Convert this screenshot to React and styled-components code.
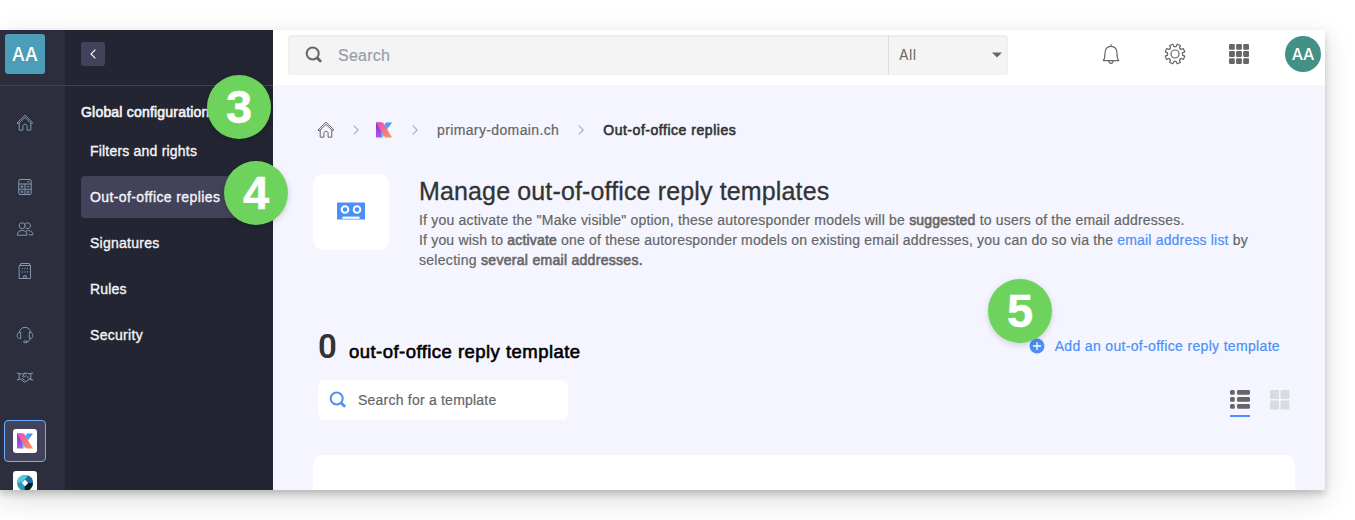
import React from "react";
import styled, { createGlobalStyle } from "styled-components";

const GlobalStyle = createGlobalStyle`
  * {
    box-sizing: border-box;
  }
  body {
    margin: 0;
    background: #fff;
    overflow: hidden;
    font-family: "Liberation Sans", Arial, sans-serif;
    -webkit-font-smoothing: antialiased;
  }
  svg {
    display: block;
    flex: none;
  }
`;

const Page = styled.div`
  height: 520px;
  padding-top: 30px;
  overflow: hidden;
`;
const Window = styled.div`
  position: relative;
  width: 1325px;
  height: 460px;
  box-shadow: 0 4px 7px rgba(0, 0, 0, 0.19), 0 9px 28px rgba(0, 0, 0, 0.14);
`;
const Layout = styled.div`
  display: flex;
  height: 100%;
  overflow: hidden;
`;
const Rail = styled.nav`
  flex: none;
  width: 65px;
  height: 460px;
  overflow: hidden;
  background: #2c2e3e;
`;
const RailTop = styled.div`
  height: 56px;
  padding: 4px 5px;
  border-bottom: 1px solid #41425a;
`;
const Workspace = styled.div`
  width: 40px;
  height: 40px;
  border-radius: 3px;
  background: #4c9eb8;
  color: #fff;
  font: 500 18px/42px Inter, sans-serif;
  text-align: center;
`;
const RailItem = styled.div`
  display: flex;
  align-items: center;
  justify-content: center;
  width: 50px;
  height: 42px;
  margin-top: ${(p) => p.$gap || 0}px;
  color: #8298ae;
`;
const ProductItem = styled.div`
  display: flex;
  align-items: center;
  justify-content: center;
  width: 42px;
  height: 42px;
  margin-left: 4px;
  border: 1px solid ${(p) => (p.$active ? "#69aeff" : "transparent")};
  border-radius: 4px;
  background: ${(p) => (p.$active ? "#42425a" : "transparent")};
`;
const ProductTile = styled.div`
  display: flex;
  align-items: center;
  justify-content: center;
  width: 24px;
  height: 24px;
  border-radius: 3px;
  background: #fff;
`;

const Sidebar = styled.aside`
  flex: none;
  width: 208px;
  background: #232532;
  color: #f4f4f8;
`;
const SidebarTop = styled.div`
  height: 56px;
  padding: 12px 16px;
  border-bottom: 1px solid #41425a;
`;
const BackButton = styled.div`
  display: flex;
  align-items: center;
  justify-content: center;
  width: 24px;
  height: 24px;
  border-radius: 3px;
  background: #42425a;
`;
const Menu = styled.div`
  padding: 13px 16px;
`;
const MenuTitle = styled.div`
  height: 31px;
  font-size: 14px;
  line-height: 27px;
  white-space: nowrap;
  letter-spacing: ${(p) => p.$spacing}px;
  -webkit-text-stroke: 0.6px;
`;
const MenuItem = styled.div`
  height: 42px;
  margin-bottom: 4px;
  padding-left: 9px;
  border-radius: 4px;
  background: ${(p) => (p.$active ? "#42425a" : "transparent")};
  font-size: 14px;
  line-height: 42px;
  white-space: nowrap;
  letter-spacing: ${(p) => p.$spacing}px;
  -webkit-text-stroke: 0.35px;
`;

const Main = styled.main`
  flex: 1;
  min-width: 0;
  background: #f4f5fe;
`;
const TopBar = styled.header`
  display: flex;
  align-items: center;
  height: 55px;
  padding: 0 4px 7px 15px;
  background: #fff;
  color: #666;
`;
const SearchBar = styled.div`
  display: flex;
  align-items: center;
  width: 720px;
  height: 40px;
  margin-top: 2px;
  border-radius: 4px;
  background: #f4f4f4;
  box-shadow: inset 0 1px 3px rgba(0, 0, 0, 0.06);
`;
const SearchField = styled.div`
  display: flex;
  align-items: center;
  width: 601px;
  height: 40px;
  padding: 0 0 1px 17px;
  border-right: 1px solid #dcdcdc;
  color: #9a9daa;
  font-size: 16px;
`;
const Placeholder = styled.span`
  padding: 3px 0 0 15px;
  letter-spacing: 0.25px;
  -webkit-text-stroke: 0.2px;
`;
const Scope = styled.div`
  display: flex;
  flex: 1;
  align-items: center;
  justify-content: space-between;
  padding: 0 6px 1px 10px;
  font: 400 14px Inter, sans-serif;
  letter-spacing: 0.3px;
`;
const TopIcons = styled.div`
  display: flex;
  align-items: center;
  gap: 40px;
  margin-left: 91px;
`;
const Avatar = styled.div`
  width: 36px;
  height: 36px;
  margin-left: auto;
  border-radius: 50%;
  background: #439184;
  color: #fff;
  font: 500 16px/37px Inter, sans-serif;
  letter-spacing: -0.3px;
  text-align: center;
`;

const Content = styled.div`
  padding: 33px 30px 0 40px;
`;
const Breadcrumb = styled.div`
  display: flex;
  align-items: center;
  height: 24px;
  padding-left: 4px;
  color: #666;
  font-size: 14px;
`;
const Crumb = styled.span`
  letter-spacing: ${(p) => p.$spacing}px;
  color: ${(p) => (p.$current ? "#333" : "#666")};
  -webkit-text-stroke: ${(p) => (p.$current ? 0.6 : 0.2)}px;
`;
const Separator = styled.span`
  display: flex;
  justify-content: center;
  width: ${(p) => p.$width}px;
  color: #aaaab2;
`;
const Intro = styled.section`
  display: flex;
  gap: 30px;
  height: 98px;
  margin-top: 32px;
`;
const IntroIcon = styled.div`
  display: flex;
  align-items: center;
  justify-content: center;
  width: 76px;
  height: 76px;
  padding-bottom: 2px;
  border-radius: 10px;
  background: #fff;
`;
const Heading = styled.h1`
  margin: 0;
  height: 36px;
  color: #333;
  font-size: 25px;
  font-weight: 400;
  line-height: 35px;
  letter-spacing: 0.14px;
  -webkit-text-stroke: 0.3px;
`;
const Text = styled.p`
  margin: 0;
  color: #666;
  font-size: 14px;
  line-height: 20px;
  white-space: nowrap;
  letter-spacing: ${(p) => p.$spacing}px;
  -webkit-text-stroke: 0.2px;
`;
const Strong = styled.strong`
  font-weight: 400;
  -webkit-text-stroke: 0.6px;
`;
const Link = styled.a`
  color: #4a90f8;
`;
const ListHeader = styled.div`
  display: flex;
  align-items: baseline;
  height: 40px;
  margin-top: 55px;
  padding: 0 15px 0 5px;
`;
const Count = styled.span`
  width: 31px;
  color: #333;
  font: 600 33px/40px "Roboto", sans-serif;
`;
const CountLabel = styled.span`
  font-size: 18.5px;
  letter-spacing: ${(p) => p.$spacing}px;
  -webkit-text-stroke: 0.6px;
`;
const AddLink = styled.a`
  display: flex;
  align-items: center;
  align-self: flex-start;
  gap: 10px;
  margin-left: auto;
  color: #4a90f8;
  font-size: 14px;
  line-height: 38px;
  letter-spacing: ${(p) => p.$spacing}px;
  -webkit-text-stroke: 0.2px;
`;
const Toolbar = styled.div`
  display: flex;
  align-items: flex-start;
  justify-content: space-between;
  margin-top: 13px;
  padding: 0 5px;
`;
const TemplateSearch = styled.div`
  display: flex;
  align-items: center;
  gap: 11px;
  width: 250px;
  height: 40px;
  padding-left: 11px;
  border-radius: 6px;
  background: #fff;
  color: #666;
  font-size: 14px;
  letter-spacing: 0.22px;
  -webkit-text-stroke: 0.2px;
`;
const Views = styled.div`
  display: flex;
  gap: 20px;
  padding-top: 10px;
`;
const View = styled.div`
  height: 27px;
  border-bottom: 2px solid ${(p) => (p.$active ? "#4a90f8" : "transparent")};
`;
const Panel = styled.div`
  height: 60px;
  margin-top: 35px;
  border-radius: 10px;
  background: #fff;
`;

const Step = styled.div`
  position: absolute;
  left: ${(p) => p.$x}px;
  top: ${(p) => p.$y}px;
  width: 64px;
  height: 64px;
  border-radius: 50%;
  background: #6ed35d;
  box-shadow: 0 2px 6px rgba(0, 0, 0, 0.16);
  color: #fff;
  font: 700 47px/63px "Liberation Sans", Arial, sans-serif;
  text-align: center;
  -webkit-text-stroke: 0.5px;
`;

const Icon = ({ size = 18, stroke = 1, children }) => (
  <svg
    width={size}
    height={size}
    viewBox="0 0 18 18"
    fill="none"
    stroke="currentColor"
    strokeWidth={stroke}
    strokeLinecap="round"
    strokeLinejoin="round"
  >
    {children}
  </svg>
);

const HomeIcon = () => (
  <Icon>
    <path d="M1.2 8.8 9 1.2l7.8 7.6-1.2.9L9 3.4 2.4 9.7zM3.2 9v7.2h3.7v-3.9c0-1.2.8-2 2.1-2s2.1.8 2.1 2v3.9h3.7V9" />
  </Icon>
);

const CalculatorIcon = () => (
  <Icon>
    <rect x="2.8" y="1.5" width="12.4" height="15" rx="1.2" />
    <path d="M3 6h12M3 11.2h12M9 6v10.3M11.5 3.8h1.5M5 8.6h2M6 7.7v1.8M11 8.6h2M5 13l2 1.6M7 13l-2 1.6M11 13.2h2M11 14.8h2" />
  </Icon>
);

const UsersIcon = () => (
  <Icon>
    <circle cx="6.2" cy="5.7" r="3" />
    <path d="M9.6 3.4a3 3 0 1 1 .2 4.8M1.3 14.8c0-2.7 1.8-4.3 4.9-4.3s4.8 1.6 4.8 4.3zM10.4 10.9c3.3-1.2 6.5.6 6.5 3.9h-3.6" />
  </Icon>
);

const BuildingIcon = () => (
  <Icon>
    <path d="M3.5 3.5h11v13h-11zM4.2 3.3l.6-1.8h8.4l.6 1.8M7.8 16.2v-2.4h2.5v2.4" />
    <path d="M6.4 6.2v.5M9 6.2v.5M11.6 6.2v.5M6.4 9.7v.5M9 9.7v.5M11.6 9.7v.5" />
  </Icon>
);

const HeadsetIcon = () => (
  <Icon>
    <path d="M3.3 6.2C4 3 6 1.4 9 1.4S14 3 14.7 6.2M3.6 6.3h1.1v6.2H3.4C2 12.3 1.2 11 1.2 9.4s.9-2.9 2.4-3.1zM14.4 6.3h-1.1v6.2h1.3c1.4-.2 2.2-1.5 2.2-3.1s-.9-2.9-2.4-3.1zM14.4 12.5c-.3 1.9-1.3 3-3.4 3.3" />
    <ellipse cx="9.4" cy="15.8" rx="1.8" ry="1" />
  </Icon>
);

const HandshakeIcon = () => (
  <Icon>
    <path d="M1.2 5.2h2v6.6h-2M16.8 5.2h-2v6.6h2M3.3 6h3.4L9 5l2.8.7h2.8M3.3 11.2h1.2l4.2 3.1 4.7-3.1h1.4M9 5.2 6.5 8.5c1.2.8 2.5.3 3.6-1l3.5 3.5M6.2 10.3l2.3 2" />
  </Icon>
);

const SearchIcon = ({ size, color }) => (
  <svg
    width={size}
    height={size}
    viewBox="0 0 18 18"
    fill="none"
    stroke={color}
    strokeLinecap="round"
  >
    <circle cx="7.7" cy="7.5" r="6" strokeWidth="2" />
    <path d="m12.5 12.3 2.8 2.8" strokeWidth="2.8" />
  </svg>
);

const BellIcon = () => (
  <svg width="24" height="24" viewBox="0 0 24 24" fill="none" stroke="currentColor" strokeWidth="1.2" strokeLinejoin="round">
    <path d="M12 2.2v2M4.3 18.6c1.3-1.6 1.7-3.4 1.7-7C6 7 8.2 4.3 12 4.3s6 2.7 6 7.3c0 3.6.4 5.4 1.7 7zM9.8 18.8c0 1.6.9 2.5 2.2 2.5s2.2-.9 2.2-2.5" />
  </svg>
);

// eight-toothed gear, one tooth per 45 degrees
const gearPath = () => {
  const points = [];
  for (let i = 0; i < 8; i++) {
    [
      [-14, 7.5],
      [-10, 10],
      [10, 10],
      [14, 7.5],
    ].forEach(([deg, r]) => {
      const a = ((i * 45 + 22.5 + deg) * Math.PI) / 180;
      points.push(`${(12 + r * Math.cos(a)).toFixed(2)} ${(12 + r * Math.sin(a)).toFixed(2)}`);
    });
  }
  return `M${points.join("L")}z`;
};

const GearIcon = () => (
  <svg width="24" height="24" viewBox="0 0 24 24" fill="none" stroke="currentColor" strokeWidth="1.2" strokeLinejoin="round">
    <path d={gearPath()} />
    <circle cx="12" cy="12" r="4" />
  </svg>
);

const AppsIcon = () => (
  <svg width="24" height="24" viewBox="0 0 24 24" fill="currentColor">
    {[2, 9.1, 16.2].map((y) =>
      [2, 9.1, 16.2].map((x) => (
        <rect key={`${x}-${y}`} x={x} y={y} width="5.8" height="5.8" rx="1.2" />
      ))
    )}
  </svg>
);

const ChevronIcon = () => (
  <svg width="8" height="10" viewBox="0 0 8 10" fill="none" stroke="currentColor" strokeWidth="1.1">
    <path d="m1.8.7 4.4 4.3-4.4 4.3" />
  </svg>
);

const KLogo = ({ id }) => (
  <svg width="16" height="16" viewBox="0 0 16 16">
    <defs>
      <linearGradient id={`${id}-stem`} x1="0" y1="0" x2="0" y2="1">
        <stop offset="0" stopColor="#8c35b8" />
        <stop offset="1" stopColor="#a957ff" />
      </linearGradient>
      <linearGradient id={`${id}-leg`} x1="0" y1="0" x2="1" y2="1">
        <stop offset="0" stopColor="#e646c6" />
        <stop offset="1" stopColor="#ff9a4a" />
      </linearGradient>
      <linearGradient id={`${id}-arm`} x1="0" y1="1" x2="1" y2="0">
        <stop offset="0" stopColor="#5de5ef" />
        <stop offset="1" stopColor="#4684ff" />
      </linearGradient>
    </defs>
    <path d="M5 15.5V7l5-6.5h6L10.5 8 7 15.5z" fill={`url(#${id}-arm)`} />
    <path d="M0 .5h5.5v15H0z" fill={`url(#${id}-stem)`} />
    <path d="M0 .5h7l9 15H9z" fill={`url(#${id}-leg)`} />
  </svg>
);

const RingLogo = () => (
  <svg width="16" height="16" viewBox="0 0 16 16">
    <circle cx="8" cy="8" r="8" fill="#289cb1" />
    <path d="M8 0A8 8 0 0 0 0 8l5-1 3-3 3-3a8 8 0 0 0-3-1z" fill="#55c8dc" />
    <path d="M11 .6A8 8 0 0 1 16 8h-5L8 5z" fill="#1d6d9a" />
    <path d="M16 8a8 8 0 0 1-8 8l-.5-4.5L11 8z" fill="#071d2b" />
    <path d="m8 4.8 3.2 3.2L8 11.2 4.8 8z" fill="#fff" />
  </svg>
);

const menuItems = [
  { label: "Filters and rights", spacing: 0.2 },
  { label: "Out-of-office replies", spacing: 0.4, active: true },
  { label: "Signatures", spacing: 0.25 },
  { label: "Rules", spacing: 0.15 },
  { label: "Security", spacing: 0.3 },
];

const App = () => {
  return (
    <Page>
      <GlobalStyle />
      <Window>
        <Layout>
          <Rail>
            <RailTop>
              <Workspace>AA</Workspace>
            </RailTop>
            <RailItem $gap={16}>
              <HomeIcon />
            </RailItem>
            <RailItem $gap={22}>
              <CalculatorIcon />
            </RailItem>
            <RailItem>
              <UsersIcon />
            </RailItem>
            <RailItem>
              <BuildingIcon />
            </RailItem>
            <RailItem $gap={22}>
              <HeadsetIcon />
            </RailItem>
            <RailItem>
              <HandshakeIcon />
            </RailItem>
            <RailItem $gap={-20} />
            <ProductItem $active>
              <ProductTile>
                <KLogo id="rail" />
              </ProductTile>
            </ProductItem>
            <ProductItem>
              <ProductTile>
                <RingLogo />
              </ProductTile>
            </ProductItem>
          </Rail>

          <Sidebar>
            <SidebarTop>
              <BackButton>
                <svg width="8" height="10" viewBox="0 0 8 10" fill="none" stroke="#fff" strokeWidth="1.1">
                  <path d="M6.4.7 2 5l4.4 4.3" />
                </svg>
              </BackButton>
            </SidebarTop>
            <Menu>
              <MenuTitle $spacing={0.2}>Global configuration</MenuTitle>
              {menuItems.map((m) => (
                <MenuItem key={m.label} $active={m.active} $spacing={m.spacing}>
                  {m.label}
                </MenuItem>
              ))}
            </Menu>
          </Sidebar>

          <Main>
            <TopBar>
              <SearchBar>
                <SearchField>
                  <SearchIcon size={18} color="#666" />
                  <Placeholder>Search</Placeholder>
                </SearchField>
                <Scope>
                  All
                  <svg width="10" height="6" viewBox="0 0 10 6">
                    <path d="M0 .5h10L5 5.5z" fill="#666" />
                  </svg>
                </Scope>
              </SearchBar>
              <TopIcons>
                <BellIcon />
                <GearIcon />
                <AppsIcon />
              </TopIcons>
              <Avatar>AA</Avatar>
            </TopBar>
            <Content>
              <Breadcrumb>
                <HomeIcon />
                <Separator $width={41}>
                  <ChevronIcon />
                </Separator>
                <KLogo id="crumb" />
                <Separator $width={45}>
                  <ChevronIcon />
                </Separator>
                <Crumb $spacing={0.37}>primary-domain.ch</Crumb>
                <Separator $width={44}>
                  <ChevronIcon />
                </Separator>
                <Crumb $current $spacing={0.53}>
                  Out-of-office replies
                </Crumb>
              </Breadcrumb>
              <Intro>
                <IntroIcon>
                  <svg width="28" height="18" viewBox="0 0 28 18">
                    <path d="M0 .5h28v17H0z" fill="#4a90f8" />
                    <g fill="none" stroke="#fff">
                      <circle cx="8" cy="7.5" r="3.3" strokeWidth="2" />
                      <circle cx="20" cy="7.5" r="3.3" strokeWidth="2" />
                      <path d="M5.5 15.7h17" strokeWidth="2.2" />
                    </g>
                  </svg>
                </IntroIcon>
                <div>
                  <Heading>Manage out-of-office reply templates</Heading>
                  <Text $spacing={0.2}>
                    If you activate the "Make visible" option, these autoresponder models will be{" "}
                    <Strong>suggested</Strong> to users of the email addresses.
                  </Text>
                  <Text $spacing={0.18}>
                    If you wish to <Strong>activate</Strong> one of these autoresponder models on existing
                    email addresses, you can do so via the <Link>email address list</Link> by
                  </Text>
                  <Text $spacing={0.29}>
                    selecting <Strong>several email addresses.</Strong>
                  </Text>
                </div>
              </Intro>
              <ListHeader>
                <Count>0</Count>
                <CountLabel $spacing={0.46}>out-of-office reply template</CountLabel>
                <AddLink $spacing={0.33}>
                  <svg width="16" height="16" viewBox="0 0 16 16">
                    <circle cx="8" cy="8" r="7.5" fill="#4a90f8" />
                    <path d="M8 4v8M4 8h8" stroke="#fff" strokeWidth="1.3" />
                  </svg>
                  Add an out-of-office reply template
                </AddLink>
              </ListHeader>
              <Toolbar>
                <TemplateSearch>
                  <SearchIcon size={18} color="#4a90f8" />
                  Search for a template
                </TemplateSearch>
                <Views>
                  <View $active>
                    <svg width="20" height="20" viewBox="0 0 20 20" fill="#666">
                      {[0, 7, 14].map((y) => (
                        <g key={y}>
                          <rect y={y} width="4.8" height="4.8" rx="1.5" />
                          <rect x="7" y={y} width="13" height="4.8" rx="1.3" />
                        </g>
                      ))}
                    </svg>
                  </View>
                  <View>
                    <svg width="20" height="20" viewBox="0 0 20 20" fill="#dadbe1">
                      <rect width="9" height="9" rx="1" />
                      <rect x="10.5" width="9" height="9" rx="1" />
                      <rect y="10.5" width="9" height="9" rx="1" />
                      <rect x="10.5" y="10.5" width="9" height="9" rx="1" />
                    </svg>
                  </View>
                </Views>
              </Toolbar>
              <Panel />
            </Content>
          </Main>
        </Layout>
        <Step $x={207} $y={45}>3</Step>
        <Step $x={224} $y={131}>4</Step>
        <Step $x={988} $y={249}>5</Step>
      </Window>
    </Page>
  );
};

export default App;
